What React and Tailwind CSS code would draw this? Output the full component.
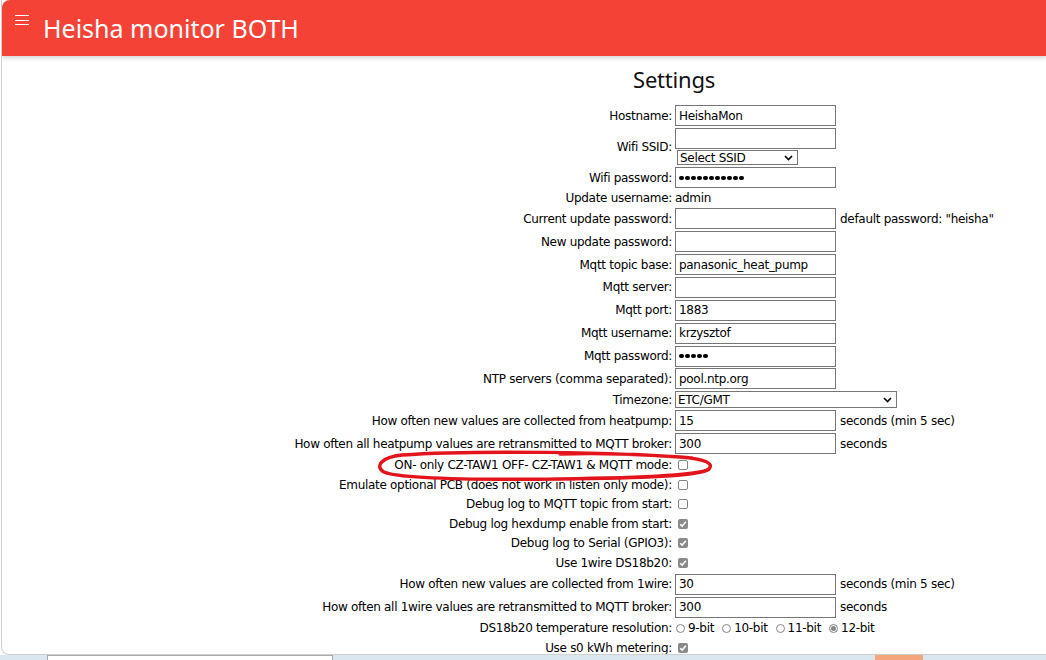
import React from "react";

const F = { fontFamily: '"DejaVu Sans", Verdana, sans-serif' };

function TextBox({ value = "", dots = 0 }) {
  return (
    <div className="h-[21px] w-[161px] border border-[#767676] bg-white px-[3px] flex items-center text-[12px] text-black overflow-hidden whitespace-nowrap">
      {dots > 0 ? (
        <span className="flex gap-[1.5px]">
          {Array.from({ length: dots }).map((_, i) => (
            <span key={i} className="w-[4.5px] h-[4.5px] rounded-full bg-black inline-block" />
          ))}
        </span>
      ) : (
        value
      )}
    </div>
  );
}

function SelectBox({ value, w, h = "h-[15px]" }) {
  return (
    <div className={`${w} ${h} border border-[#767676] bg-white flex items-center justify-between pl-[2px] pr-[4px] text-[12px] text-black`}>
      <span>{value}</span>
      <svg width="9" height="6" viewBox="0 0 9 6"><path d="M1 1 L4.5 4.5 L8 1" fill="none" stroke="#000" strokeWidth="1.6" /></svg>
    </div>
  );
}

function Check({ on }) {
  return on ? (
    <span className="ml-[3px] w-[10px] h-[10px] rounded-[2px] bg-[#8a8a8a] inline-flex items-center justify-center">
      <svg width="8" height="8" viewBox="0 0 8 8"><path d="M1.2 4.2 L3.2 6.1 L6.9 1.8" fill="none" stroke="#fff" strokeWidth="1.5" /></svg>
    </span>
  ) : (
    <span className="ml-[3px] w-[10px] h-[10px] rounded-[2px] border border-[#858585] bg-white inline-block" />
  );
}

function Radio({ on }) {
  return (
    <span className="w-[9px] h-[9px] rounded-full border border-[#858585] bg-white inline-flex items-center justify-center">
      {on && <span className="w-[5px] h-[5px] rounded-full bg-[#858585]" />}
    </span>
  );
}

function Row({ label, h = "h-[20.9px]", children, extra, labelCls = "" }) {
  return (
    <div className={`flex items-center ${h} shrink-0`}>
      <div className={`w-[670px] shrink-0 text-right whitespace-nowrap ${labelCls}`}>{label}</div>
      <div className="pl-[3px] flex items-center shrink-0">{children}</div>
      {extra && <div className="pl-[4px] whitespace-nowrap">{extra}</div>}
    </div>
  );
}

export default function App() {
  const cbH = "h-[17.6px]";
  return (
    <div className="relative w-[1046px] h-[660px] bg-white overflow-hidden">
      <div className="h-[655px] ml-[1px] border-l border-b border-[#cfcfcf] rounded-bl-[8px] overflow-hidden flex flex-col">
        <header
          className="relative z-10 h-[56px] shrink-0 bg-[#f44336] rounded-tl-[8px] shadow-[0_2px_5px_rgba(0,0,0,0.18)] flex items-start"
          style={{ fontFamily: '"Noto Sans", "Open Sans", sans-serif' }}
        >
          <div className="ml-[13px] mt-[15px] w-[14px] flex flex-col gap-[3.5px]">
            <span className="h-[1px] bg-white" />
            <span className="h-[1px] bg-white" />
            <span className="h-[1px] bg-white" />
          </div>
          <div className="ml-[14px] mt-[12px] text-white text-[25px] leading-[32px]">Heisha monitor BOTH</div>
        </header>

        <div className="flex flex-col text-[12px] text-black tracking-[-0.3px]" style={F}>
          <div
            className="mt-[7px] h-[32px] ml-[631px] text-[22px] leading-[32px] text-[#111] tracking-[-0.2px]"
            style={{ fontFamily: '"Noto Sans", "Open Sans", sans-serif' }}
          >
            Settings
          </div>

          <div className="mt-[10.5px] flex flex-col gap-[2px]">
            <Row label="Hostname:"><TextBox value="HeishaMon" /></Row>
            <Row label="Wifi SSID:" h="h-[37px]">
              <div className="flex flex-col gap-[1px]">
                <TextBox />
                <div className="pl-[2px]"><SelectBox value="Select SSID" w="w-[121px]" /></div>
              </div>
            </Row>
            <Row label="Wifi password:"><TextBox dots={11} /></Row>
            <Row label="Update username:" h="h-[16px]">admin</Row>
            <Row label="Current update password:" extra={'default password: "heisha"'}><TextBox /></Row>
            <Row label="New update password:"><TextBox /></Row>
            <Row label="Mqtt topic base:"><TextBox value="panasonic_heat_pump" /></Row>
            <Row label="Mqtt server:"><TextBox /></Row>
            <Row label="Mqtt port:"><TextBox value="1883" /></Row>
            <Row label="Mqtt username:"><TextBox value="krzysztof" /></Row>
            <Row label="Mqtt password:"><TextBox dots={5} /></Row>
            <Row label="NTP servers (comma separated):"><TextBox value="pool.ntp.org" /></Row>
            <Row label="Timezone:" h="h-[17px]"><SelectBox value="ETC/GMT" w="w-[222px]" h="h-[17px]" /></Row>
            <Row label="How often new values are collected from heatpump:" extra="seconds (min 5 sec)"><TextBox value="15" /></Row>
            <Row label="How often all heatpump values are retransmitted to MQTT broker:" extra="seconds"><TextBox value="300" /></Row>
            <Row label="ON- only CZ-TAW1 OFF- CZ-TAW1 &amp; MQTT mode:" h={cbH}><Check on={false} /></Row>
            <Row label="Emulate optional PCB (does not work in listen only mode):" h={cbH}><Check on={false} /></Row>
            <Row label="Debug log to MQTT topic from start:" h={cbH}><Check on={false} /></Row>
            <Row label="Debug log hexdump enable from start:" h={cbH}><Check on /></Row>
            <Row label="Debug log to Serial (GPIO3):" h={cbH}><Check on /></Row>
            <Row label="Use 1wire DS18b20:" h={cbH}><Check on /></Row>
            <Row label="How often new values are collected from 1wire:" extra="seconds (min 5 sec)"><TextBox value="30" /></Row>
            <Row label="How often all 1wire values are retransmitted to MQTT broker:" extra="seconds"><TextBox value="300" /></Row>
            <Row label="DS18b20 temperature resolution:" h={cbH}>
              <div className="flex items-center gap-[3px] pl-[1px] whitespace-nowrap">
                <Radio /> <span className="mr-[5px]">9-bit</span>
                <Radio /> <span className="mr-[5px]">10-bit</span>
                <Radio /> <span className="mr-[5px]">11-bit</span>
                <Radio on /> <span>12-bit</span>
              </div>
            </Row>
            <Row label="Use s0 kWh metering:" h={cbH}><Check on /></Row>
          </div>
        </div>
      </div>

      <div className="h-[5px] bg-[#dae6f0] flex">
        <div className="ml-[47px] w-[286px] h-[5px] bg-white border-t border-l border-r border-[#a8a8a8]" />
        <div className="ml-[542px] w-[48px] h-[5px] bg-[#f4a57c]" />
      </div>

      <svg className="absolute inset-0 pointer-events-none" width="1046" height="660" viewBox="0 0 1046 660">
        <path
          d="M 692 458 C 620 452 470 450 402 455 C 382 457 374 466 384 472 C 400 479 470 480 560 479 C 640 478 700 476 709 469 C 714 463 705 459 680 457 C 640 454 600 453 560 454"
          fill="none"
          stroke="#e3141c"
          strokeWidth="3.5"
          strokeLinecap="round"
        />
      </svg>
    </div>
  );
}
